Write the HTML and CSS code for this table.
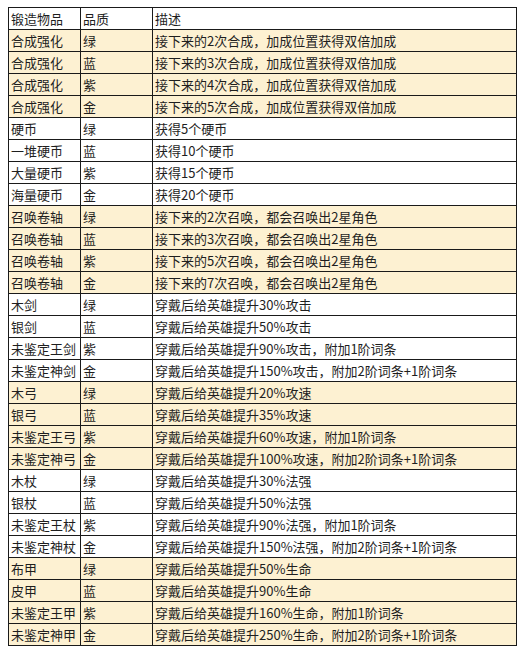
FILE: index.html
```html
<!DOCTYPE html>
<html lang="zh-CN">
<head>
<meta charset="utf-8">
<link rel="stylesheet" href="styles.css">
</head>
<body>
<table class="forge">
<colgroup><col class="c1"><col class="c2"><col class="c3"></colgroup>
<tr><td>锻造物品</td><td>品质</td><td>描述</td></tr>
<tr class="hl"><td>合成强化</td><td>绿</td><td>接下来的2次合成，加成位置获得双倍加成</td></tr>
<tr class="hl"><td>合成强化</td><td>蓝</td><td>接下来的3次合成，加成位置获得双倍加成</td></tr>
<tr class="hl"><td>合成强化</td><td>紫</td><td>接下来的4次合成，加成位置获得双倍加成</td></tr>
<tr class="hl"><td>合成强化</td><td>金</td><td>接下来的5次合成，加成位置获得双倍加成</td></tr>
<tr><td>硬币</td><td>绿</td><td>获得5个硬币</td></tr>
<tr><td>一堆硬币</td><td>蓝</td><td>获得10个硬币</td></tr>
<tr><td>大量硬币</td><td>紫</td><td>获得15个硬币</td></tr>
<tr><td>海量硬币</td><td>金</td><td>获得20个硬币</td></tr>
<tr class="hl"><td>召唤卷轴</td><td>绿</td><td>接下来的2次召唤，都会召唤出2星角色</td></tr>
<tr class="hl"><td>召唤卷轴</td><td>蓝</td><td>接下来的3次召唤，都会召唤出2星角色</td></tr>
<tr class="hl"><td>召唤卷轴</td><td>紫</td><td>接下来的5次召唤，都会召唤出2星角色</td></tr>
<tr class="hl"><td>召唤卷轴</td><td>金</td><td>接下来的7次召唤，都会召唤出2星角色</td></tr>
<tr><td>木剑</td><td>绿</td><td>穿戴后给英雄提升30%攻击</td></tr>
<tr><td>银剑</td><td>蓝</td><td>穿戴后给英雄提升50%攻击</td></tr>
<tr><td>未鉴定王剑</td><td>紫</td><td>穿戴后给英雄提升90%攻击，附加1阶词条</td></tr>
<tr><td>未鉴定神剑</td><td>金</td><td>穿戴后给英雄提升150%攻击，附加2阶词条+1阶词条</td></tr>
<tr class="hl"><td>木弓</td><td>绿</td><td>穿戴后给英雄提升20%攻速</td></tr>
<tr class="hl"><td>银弓</td><td>蓝</td><td>穿戴后给英雄提升35%攻速</td></tr>
<tr class="hl"><td>未鉴定王弓</td><td>紫</td><td>穿戴后给英雄提升60%攻速，附加1阶词条</td></tr>
<tr class="hl"><td>未鉴定神弓</td><td>金</td><td>穿戴后给英雄提升100%攻速，附加2阶词条+1阶词条</td></tr>
<tr><td>木杖</td><td>绿</td><td>穿戴后给英雄提升30%法强</td></tr>
<tr><td>银杖</td><td>蓝</td><td>穿戴后给英雄提升50%法强</td></tr>
<tr><td>未鉴定王杖</td><td>紫</td><td>穿戴后给英雄提升90%法强，附加1阶词条</td></tr>
<tr><td>未鉴定神杖</td><td>金</td><td>穿戴后给英雄提升150%法强，附加2阶词条+1阶词条</td></tr>
<tr class="hl"><td>布甲</td><td>绿</td><td>穿戴后给英雄提升50%生命</td></tr>
<tr class="hl"><td>皮甲</td><td>蓝</td><td>穿戴后给英雄提升90%生命</td></tr>
<tr class="hl"><td>未鉴定王甲</td><td>紫</td><td>穿戴后给英雄提升160%生命，附加1阶词条</td></tr>
<tr class="hl"><td>未鉴定神甲</td><td>金</td><td>穿戴后给英雄提升250%生命，附加2阶词条+1阶词条</td></tr>
</table>
</body>
</html>
```
FILE: styles.css
```css
html, body {
  background: #ffffff;
}
body {
  margin: 7px 0 0 8px;
  font-family: "Microsoft YaHei", "Noto Sans CJK SC", sans-serif;
  font-size: 13px;
  color: #1e1e1e;
}
.forge {
  border-collapse: collapse;
  table-layout: fixed;
  width: 508px;
}
.forge .c1 { width: 72px; }
.forge .c2 { width: 72px; }
.forge .c3 { width: 364px; }
.forge td {
  border: 1px solid #1a1a1a;
  height: 21px;
  padding: 0 2px;
  line-height: 20px;
  white-space: nowrap;
  overflow: hidden;
  vertical-align: middle;
}
.forge tr.hl td {
  background: #fdf1d2;
}
```
